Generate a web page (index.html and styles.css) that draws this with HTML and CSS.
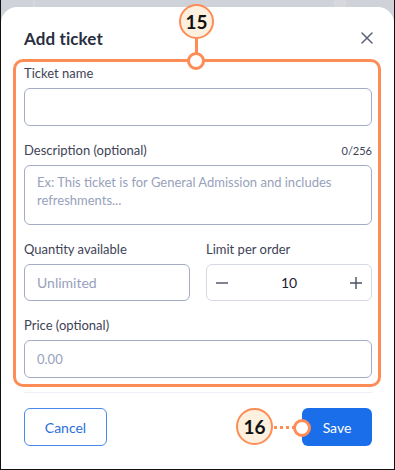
FILE: index.html
```html
<!DOCTYPE html>
<html>
<head>
<meta charset="utf-8">
<link rel="stylesheet" href="styles.css">
</head>
<body>
<div class="frame">
  <div class="backdrop"><span class="bd-a"></span><span class="bd-b"></span></div>
  <div class="modal">
    <div class="header">
      <h1 class="title">Add ticket</h1>
      <svg class="close" width="12" height="12" viewBox="0 0 12 12"><path d="M1 1L11 11M11 1L1 11" stroke="#5a6176" stroke-width="1.5" stroke-linecap="round"/></svg>
    </div>
    <div class="form">
      <div class="field">
        <div class="label-row"><span class="label">Ticket name</span></div>
        <div class="input"></div>
      </div>
      <div class="field">
        <div class="label-row"><span class="label">Description (optional)</span><span class="count">0/256</span></div>
        <div class="input textarea"><span class="ph">Ex: This ticket is for General Admission and includes refreshments...</span></div>
      </div>
      <div class="row2">
        <div class="field">
          <div class="label-row"><span class="label">Quantity available</span></div>
          <div class="input"><span class="ph">Unlimited</span></div>
        </div>
        <div class="field">
          <div class="label-row"><span class="label">Limit per order</span></div>
          <div class="input stepper">
            <svg width="14" height="14" viewBox="0 0 14 14"><path d="M1 7H13" stroke="#4a5064" stroke-width="1.4"/></svg>
            <span class="val">10</span>
            <svg width="14" height="14" viewBox="0 0 14 14"><path d="M1 7H13M7 1V13" stroke="#4a5064" stroke-width="1.4"/></svg>
          </div>
        </div>
      </div>
      <div class="field">
        <div class="label-row"><span class="label">Price (optional)</span></div>
        <div class="input"><span class="ph">0.00</span></div>
      </div>
    </div>
    <div class="divider"></div>
    <div class="footer">
      <button class="btn cancel">Cancel</button>
      <button class="btn save">Save</button>
    </div>
  </div>

  <div class="anno-rect"></div>
  <div class="badge b15">15</div>
  <div class="stem"></div>
  <div class="dot d15"></div>
  <div class="badge b16">16</div>
  <div class="dots"></div>
  <div class="dot d16"></div>
</div>
</body>
</html>
```
FILE: styles.css
```css
* { box-sizing: border-box; }
html, body { margin: 0; padding: 0; }
body { font-family: Lato, "Noto Sans", sans-serif; background: #fff; }

.frame {
  position: relative;
  width: 395px;
  height: 470px;
  border-left: 1px solid #111;
  border-right: 1px solid #111;
  border-bottom: 1px solid #111;
  background: #cfd2d9;
  overflow: hidden;
  display: flex;
  flex-direction: column;
}
.backdrop {
  height: 7px;
  flex: none;
  position: relative;
}
.bd-a, .bd-b { position: absolute; top: 0; height: 7px; background: #d6d8de; }
.bd-a { left: 32px; width: 2px; }
.bd-b { left: 333px; width: 12px; }

.modal {
  flex: 1;
  background: #fff;
  border-radius: 16px 16px 0 0;
  padding: 20px 22px 0 23px;
  display: flex;
  flex-direction: column;
}
.header {
  display: flex;
  justify-content: space-between;
  align-items: center;
  height: 22px;
}
.title {
  margin: 0;
  font-size: 17px;
  font-weight: 700;
  color: #2a2f42;
  letter-spacing: 0.1px;
}
.close { margin-right: -1px; }

.form {
  display: flex;
  flex-direction: column;
  gap: 15px;
  margin-top: 15px;
}
.field { display: flex; flex-direction: column; gap: 6px; }
.label-row {
  display: flex;
  justify-content: space-between;
  align-items: center;
  height: 18px;
}
.label { font-size: 13px; color: #3e4356; }
.count { font-size: 11px; color: #3e4356; }

.input {
  height: 38px;
  border: 1px solid #a3acc2;
  border-radius: 6px;
  display: flex;
  align-items: center;
  padding: 0 12px;
}
.ph { font-size: 13px; color: #98a1bb; line-height: 18px; }
.textarea {
  height: 60px;
  align-items: flex-start;
  padding-top: 7px;
  padding-right: 10px;
}
.row2 {
  display: grid;
  grid-template-columns: 1fr 1fr;
  gap: 16px;
}
.row2 .input { height: 37px; }
.row2 .input .ph { font-size: 14px; }
.stepper {
  border-color: #d5d9e3;
  justify-content: space-between;
  padding: 0 8px 0 8px;
}
.val { font-size: 14px; color: #1e2230; }

.divider {
  height: 1px;
  background: #eceff5;
  margin-top: 14px;
}
.footer {
  display: flex;
  justify-content: space-between;
  margin-top: 15px;
}
.btn {
  height: 38px;
  border-radius: 6px;
  font-family: inherit;
  font-size: 14px;
  padding: 0;
  cursor: pointer;
}
.cancel {
  width: 83px;
  background: #fff;
  border: 1px solid #4a8af0;
  color: #2a6fd9;
}
.save {
  width: 70px;
  background: #1b6ee9;
  border: none;
  color: #fff;
}

/* annotations */
.anno-rect {
  position: absolute;
  left: 12px;
  top: 59px;
  width: 368px;
  height: 328px;
  border: 3px solid #fe8c57;
  border-radius: 10px;
}
.badge {
  position: absolute;
  width: 35px;
  height: 35px;
  border-radius: 50%;
  background: #fdf0de;
  border: 2.5px solid #fe8c57;
  display: flex;
  align-items: center;
  justify-content: center;
  font-weight: 700;
  font-size: 19px;
  color: #111;
}
.b15 { left: 178px; top: 4px; }
.b16 { left: 235px; top: 408px; width: 37px; height: 37px; }
.stem {
  position: absolute;
  left: 194px;
  top: 37px;
  width: 3px;
  height: 16px;
  background: #fe8c57;
}
.dot {
  position: absolute;
  width: 18px;
  height: 18px;
  border-radius: 50%;
  background: #fff;
  border: 3px solid #fe8c57;
}
.d15 { left: 186px; top: 52px; }
.d16 { left: 292px; top: 419px; }
.dots {
  position: absolute;
  left: 273px;
  top: 426px;
  width: 20px;
  height: 3px;
  background: repeating-linear-gradient(90deg, #fe8c57 0 3px, transparent 3px 6px);
}
```
